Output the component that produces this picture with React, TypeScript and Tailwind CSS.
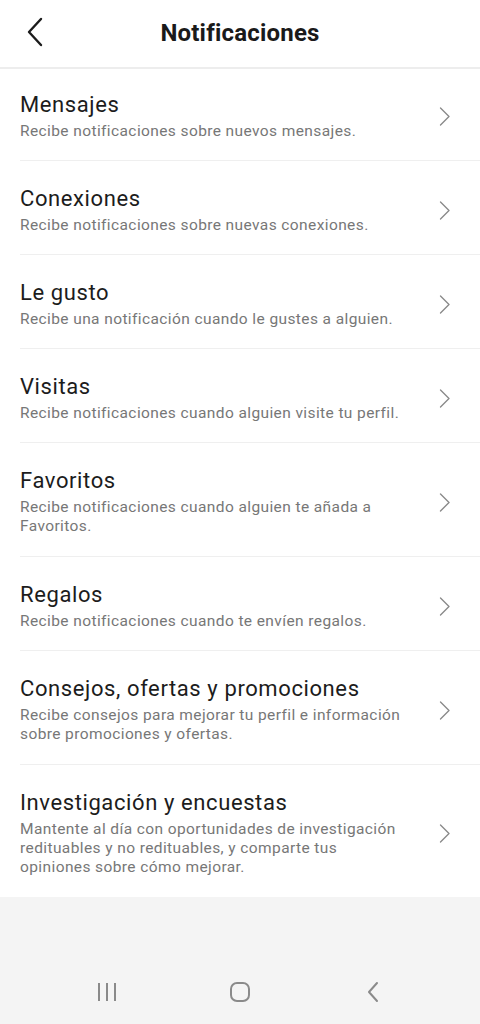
const items = [
  { title: "Mensajes", desc: "Recibe notificaciones sobre nuevos mensajes." },
  { title: "Conexiones", desc: "Recibe notificaciones sobre nuevas conexiones." },
  { title: "Le gusto", desc: "Recibe una notificación cuando le gustes a alguien." },
  { title: "Visitas", desc: "Recibe notificaciones cuando alguien visite tu perfil." },
  { title: "Favoritos", desc: "Recibe notificaciones cuando alguien te añada a Favoritos." },
  { title: "Regalos", desc: "Recibe notificaciones cuando te envíen regalos." },
  {
    title: "Consejos, ofertas y promociones",
    desc: "Recibe consejos para mejorar tu perfil e información sobre promociones y ofertas.",
  },
  {
    title: "Investigación y encuestas",
    desc: "Mantente al día con oportunidades de investigación redituables y no redituables, y comparte tus opiniones sobre cómo mejorar.",
  },
];

function Chevron() {
  return (
    <svg width="12" height="19" viewBox="0 0 12 19" fill="none" className="shrink-0">
      <path d="M1.5 1 L10 9.5 L1.5 18" stroke="#8a8a8a" strokeWidth="1.4" strokeLinecap="round" strokeLinejoin="round" />
    </svg>
  );
}

export default function App() {
  return (
    <div
      className="w-[480px] h-[1024px] bg-[#f4f4f4] flex flex-col"
      style={{ fontFamily: "Roboto, 'Noto Sans', sans-serif" }}
    >
      {/* Header */}
      <div className="h-[69px] bg-white flex items-center relative border-b-2 border-[#ededed]">
        <button className="absolute left-[22px] top-[16px] w-[26px] h-[32px] flex items-center justify-center">
          <svg width="18" height="30" viewBox="0 0 18 30" fill="none">
            <path d="M15 2 L3 15 L15 28" stroke="#1c1c1c" strokeWidth="2.4" strokeLinecap="round" strokeLinejoin="round" />
          </svg>
        </button>
        <h1 className="w-full text-center text-[24px] leading-[30px] font-bold text-[#1a1a1a] tracking-[0.2px] pb-[2px]">
          Notificaciones
        </h1>
      </div>

      {/* List */}
      <div className="bg-white">
        {items.map((item, i) => (
          <div key={item.title} className="pl-5">
            <div
              className={
                "flex items-center pr-[29px] " +
                (i === 0 ? "pt-[23px] " : "pt-[25px] ") +
                (i >= 6 || i === 4 ? "pb-[20px] " : "pb-[19px] ") +
                (i < items.length - 1 ? "border-b border-[#efefef]" : "")
              }
            >
              <div className="flex-1">
                <div className="text-[22px] leading-[26px] tracking-[0.6px] text-[#1c1c1c]">{item.title}</div>
                <div className="mt-[4px] max-w-[388px] text-[15.5px] leading-[19px] tracking-[0.4px] text-[#777777]">
                  {item.desc}
                </div>
              </div>
              <Chevron />
            </div>
          </div>
        ))}
      </div>

      <div className="flex-1" />

      {/* System nav */}
      <div className="h-[62px] flex items-center px-[40px] pb-[2px]">
        <div className="w-[134px] flex justify-center">
          <svg width="22" height="20" viewBox="0 0 22 20" fill="none">
            <path d="M3 1 V19 M11 1 V19 M19 1 V19" stroke="#8a8a8a" strokeWidth="2" />
          </svg>
        </div>
        <div className="w-[134px] flex justify-center">
          <svg width="22" height="22" viewBox="0 0 22 22" fill="none">
            <rect x="2" y="2" width="18" height="18" rx="6" stroke="#8a8a8a" strokeWidth="2" />
          </svg>
        </div>
        <div className="w-[134px] flex justify-center">
          <svg width="16" height="22" viewBox="0 0 16 22" fill="none">
            <path d="M12 2 L4 11 L12 20" stroke="#8a8a8a" strokeWidth="2" strokeLinecap="round" strokeLinejoin="round" />
          </svg>
        </div>
      </div>
    </div>
  );
}
